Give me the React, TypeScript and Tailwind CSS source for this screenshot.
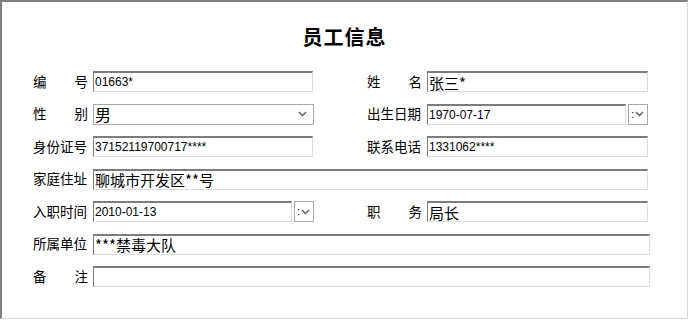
import React from "react";

const cjk = { fontFamily: '"Noto Sans CJK SC", "Noto Sans", sans-serif' };
const lat = { fontFamily: '"Liberation Sans", "Noto Sans CJK SC", sans-serif' };

function Chevron() {
  return (
    <svg width="9" height="6" viewBox="0 0 9 6">
      <path d="M1 1 L4.5 4.5 L8 1" stroke="#6b6b6b" strokeWidth="1.6" fill="none" />
    </svg>
  );
}

function Label({ chars, spread }: { chars: string; spread?: boolean }) {
  return (
    <div
      className={`w-[55px] shrink-0 flex items-center whitespace-nowrap text-[13.5px] text-black leading-none ${spread ? "justify-between" : "justify-start"}`}
      style={cjk}
    >
      {spread ? chars.split("").map((c, i) => <span key={i}>{c}</span>) : chars}
    </div>
  );
}

function Field({ value, w, cn }: { value: string; w: string; cn?: boolean }) {
  return (
    <div
      className={`${w} h-[21px] shrink-0 border-t-2 border-l border-t-[#7c7c7c] border-l-[#7c7c7c] border-r border-b border-r-[#dcdcdc] border-b-[#dcdcdc] bg-white flex items-center pl-[1px] overflow-hidden whitespace-nowrap text-black leading-none`}
    >
      <span className={cn ? "text-[15px]" : "text-[12px]"} style={cn ? cjk : lat}>
        {value}
      </span>
    </div>
  );
}

function DateField({ value }: { value: string }) {
  return (
    <div className="flex items-center gap-[2px] shrink-0">
      <Field value={value} w="w-[199px]" />
      <div className="w-[20px] h-[21px] border border-[#a8a8a8] flex items-center justify-between pl-[2px] pr-[3px] bg-white">
        <span className="text-[11px] leading-none text-black" style={lat}>:</span>
        <Chevron />
      </div>
    </div>
  );
}

function Select({ value }: { value: string }) {
  return (
    <div className="w-[221px] h-[21px] shrink-0 border border-[#a8a8a8] flex items-center justify-between pl-[1px] pr-[6px] bg-white">
      <span className="text-[16px] leading-none text-black" style={cjk}>{value}</span>
      <Chevron />
    </div>
  );
}

export default function App() {
  return (
    <div className="w-[690px] h-[320px] bg-white">
      <div className="w-[688px] h-[319px] border-t-2 border-l-2 border-t-[#808080] border-l-[#808080] border-r border-b border-r-[#d8d8d8] border-b-[#d8d8d8] bg-white flex flex-col">
        <div className="h-[69px] flex justify-center pt-[25px]">
          <div className="text-[20px] font-bold leading-none text-black tracking-[1px]" style={cjk}>
            员工信息
          </div>
        </div>
        <div className="flex flex-col gap-[11.5px] pl-[31px]">
          <div className="flex items-center">
            <Label chars="编号" spread />
            <div className="w-[5px]" />
            <Field value="01663*" w="w-[220px]" />
            <div className="w-[54px]" />
            <Label chars="姓名" spread />
            <div className="w-[5px]" />
            <Field value="张三*" w="w-[221px]" cn />
          </div>
          <div className="flex items-center">
            <Label chars="性别" spread />
            <div className="w-[5px]" />
            <Select value="男" />
            <div className="w-[53px]" />
            <Label chars="出生日期" />
            <div className="w-[5px]" />
            <DateField value="1970-07-17" />
          </div>
          <div className="flex items-center">
            <Label chars="身份证号" />
            <div className="w-[5px]" />
            <Field value="37152119700717****" w="w-[220px]" />
            <div className="w-[54px]" />
            <Label chars="联系电话" />
            <div className="w-[5px]" />
            <Field value="1331062****" w="w-[221px]" />
          </div>
          <div className="flex items-center">
            <Label chars="家庭住址" />
            <div className="w-[5px]" />
            <Field value="聊城市开发区**号" w="w-[555px]" cn />
          </div>
          <div className="flex items-center">
            <Label chars="入职时间" />
            <div className="w-[5px]" />
            <DateField value="2010-01-13" />
            <div className="w-[53px]" />
            <Label chars="职务" spread />
            <div className="w-[5px]" />
            <Field value="局长" w="w-[221px]" cn />
          </div>
          <div className="flex items-center">
            <Label chars="所属单位" />
            <div className="w-[5px]" />
            <Field value="***禁毒大队" w="w-[557px]" cn />
          </div>
          <div className="flex items-center">
            <Label chars="备注" spread />
            <div className="w-[5px]" />
            <Field value="" w="w-[557px]" />
          </div>
        </div>
      </div>
    </div>
  );
}
